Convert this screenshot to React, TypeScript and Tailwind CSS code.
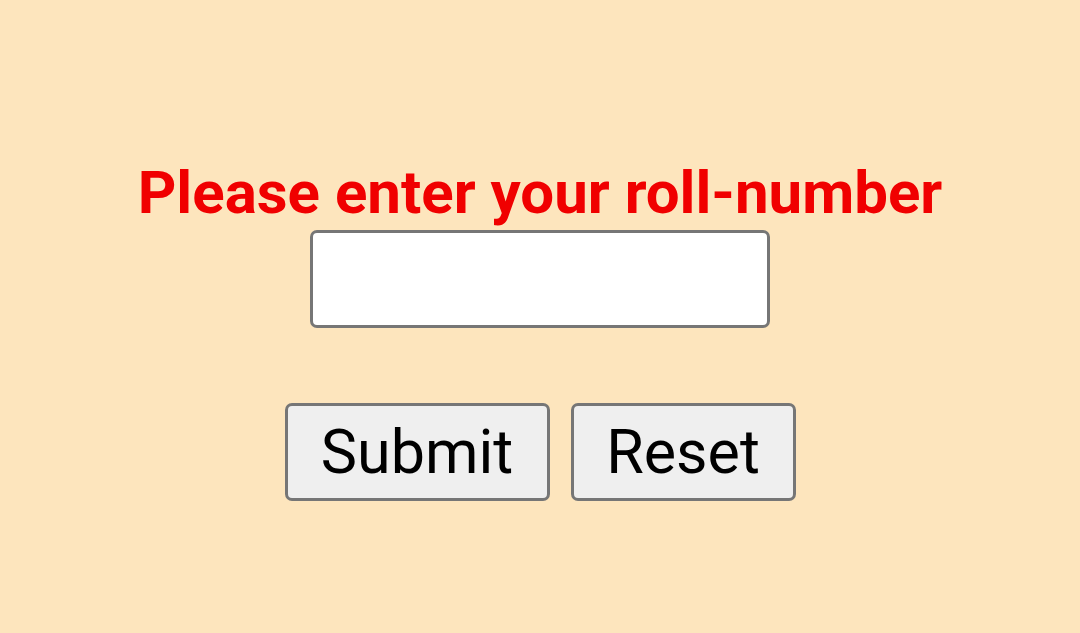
export default function App() {
  return (
    <div className="min-h-[633px] w-full bg-[#fde5bd] flex flex-col items-center pt-[163px] font-['Roboto',sans-serif]">
      {/* Heading */}
      <h1 className="text-[60px] font-bold leading-none text-[#f00000]">
        Please enter your roll-number
      </h1>

      <input
        type="text"
        className="mt-[7px] w-[460px] h-[98px] bg-white border-[3px] border-[#767676] rounded-[7px] outline-none"
      />

      {/* Buttons */}
      <div className="mt-[75px] flex gap-[21px]">
        <button className="w-[265px] h-[98px] bg-[#efefef] border-[3px] border-[#767676] rounded-[7px] text-[61px] text-black leading-none">
          Submit
        </button>
        <button className="w-[225px] h-[98px] bg-[#efefef] border-[3px] border-[#767676] rounded-[7px] text-[61px] text-black leading-none">
          Reset
        </button>
      </div>
    </div>
  );
}
